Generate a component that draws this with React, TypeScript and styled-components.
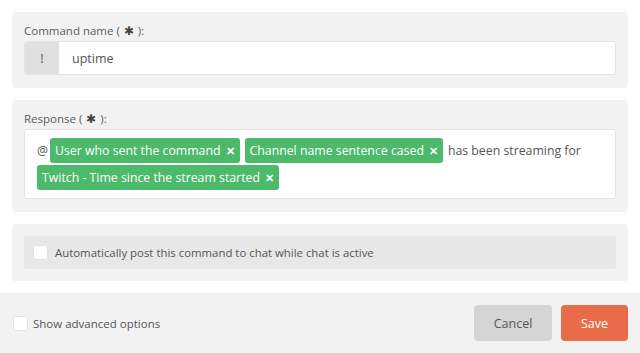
import { FC, ReactNode } from 'react';
import styled, { createGlobalStyle } from 'styled-components';

const Colors = {
    page: '#ffffff',
    panel: '#f2f2f2',
    inner: '#e8e8e8',
    prefix: '#e0e0e0',
    border: '#e4e4e4',
    text: '#555555',
    label: '#5c5c5c',
    green: '#4cb96b',
    cancel: '#d5d5d5',
    save: '#e96b49',
};

const GlobalStyle = createGlobalStyle`
    html, body {
        margin: 0;
        padding: 0;
        background: ${Colors.page};
        font-family: "Open Sans", "Noto Sans", sans-serif;
        color: ${Colors.text};
    }
    * { box-sizing: border-box; }
`;

const Page = styled.div`
    width: 640px;
    height: 353px;
    display: flex;
    flex-direction: column;
    overflow: hidden;
`;

const Body = styled.div`
    padding: 12px;
    display: flex;
    flex-direction: column;
    gap: 12px;
`;

const Panel = styled.div`
    background: ${Colors.panel};
    border-radius: 4px;
    padding: 10px 12px 13px 12px;
`;

const Label = styled.div`
    font-size: 11.5px;
    line-height: 18px;
    height: 18px;
    margin-bottom: 1px;
    color: ${Colors.label};
`;

const Star = styled.span`
    font-size: 11.5px;
    color: #444;
    margin: 0 1px;
`;

const InputRow = styled.div`
    display: flex;
    height: 34px;
    border: 1px solid ${Colors.border};
    border-radius: 3px;
    background: #fff;
    overflow: hidden;
`;

const Prefix = styled.div`
    width: 34px;
    background: ${Colors.prefix};
    display: flex;
    align-items: center;
    justify-content: center;
    font-size: 13px;
    color: ${Colors.text};
`;

const InputText = styled.div`
    flex: 1;
    display: flex;
    align-items: center;
    padding-left: 13px;
    font-size: 12.5px;
    color: ${Colors.text};
`;

const ResponseBox = styled.div`
    background: #fff;
    border: 1px solid ${Colors.border};
    border-radius: 3px;
    padding: 8px 12px;
    display: flex;
    flex-wrap: wrap;
    align-items: center;
    row-gap: 2px;
    font-size: 12.3px;
    min-height: 69px;
`;

const Plain = styled.span`
    line-height: 25px;
    margin-right: 2px;
`;

const Tag = styled.span`
    display: inline-flex;
    align-items: center;
    height: 25px;
    padding: 0 5px;
    margin-right: 5px;
    background: ${Colors.green};
    color: #fff;
    border-radius: 3px;
    font-size: 12.3px;
    white-space: nowrap;
`;

const TagClose = styled.span`
    font-weight: bold;
    font-size: 10.5px;
    margin-left: 5px;
`;

const AutoPanel = styled(Panel)`
    padding: 12px;
`;

const CheckRow = styled.label<{ $shade?: boolean }>`
    display: flex;
    align-items: center;
    gap: 7px;
    height: 33px;
    padding-left: ${p => (p.$shade ? '9px' : '0')};
    background: ${p => (p.$shade ? Colors.inner : 'transparent')};
    border-radius: 3px;
    font-size: 11.4px;
    color: ${Colors.text};
`;

const Box = styled.span`
    width: 15px;
    height: 15px;
    background: #fff;
    border: 1px solid #e2e2e2;
    border-radius: 3px;
    display: inline-block;
    flex-shrink: 0;
`;

const Footer = styled.div`
    flex: 1;
    background: ${Colors.panel};
    display: flex;
    align-items: center;
    justify-content: space-between;
    padding: 0 12px 0 13px;
`;

const FooterCheck = styled.label`
    display: flex;
    align-items: center;
    gap: 5px;
    font-size: 11.5px;
    color: ${Colors.text};
`;

const Buttons = styled.div`
    display: flex;
    gap: 9px;
`;

const Button = styled.button<{ $primary?: boolean }>`
    height: 36px;
    width: ${p => (p.$primary ? '67px' : '78px')};
    border: none;
    border-radius: 4px;
    font-family: "Open Sans", "Noto Sans", sans-serif;
    font-size: 12.5px;
    background: ${p => (p.$primary ? Colors.save : Colors.cancel)};
    color: ${p => (p.$primary ? '#fff' : Colors.text)};
`;

const Required: FC<{ children: ReactNode }> = ({ children }) => (
    <Label>
        {children} ( <Star>✱</Star> ):
    </Label>
);

const TagItem: FC<{ text: string }> = ({ text }) => (
    <Tag>
        {text}
        <TagClose>✕</TagClose>
    </Tag>
);

export default function App() {
    return (
        <>
            <GlobalStyle />
            <Page>
                <Body>
                    <Panel>
                        <Required>Command name</Required>
                        <InputRow>
                            <Prefix>!</Prefix>
                            <InputText>uptime</InputText>
                        </InputRow>
                    </Panel>

                    <Panel>
                        <Required>Response</Required>
                        <ResponseBox>
                            <Plain>@</Plain>
                            <TagItem text="User who sent the command" />
                            <TagItem text="Channel name sentence cased" />
                            <Plain>has been streaming for</Plain>
                            <TagItem text="Twitch - Time since the stream started" />
                        </ResponseBox>
                    </Panel>

                    <AutoPanel>
                        <CheckRow $shade>
                            <Box />
                            Automatically post this command to chat while chat is active
                        </CheckRow>
                    </AutoPanel>
                </Body>

                <Footer>
                    <FooterCheck>
                        <Box />
                        Show advanced options
                    </FooterCheck>
                    <Buttons>
                        <Button>Cancel</Button>
                        <Button $primary>Save</Button>
                    </Buttons>
                </Footer>
            </Page>
        </>
    );
}
